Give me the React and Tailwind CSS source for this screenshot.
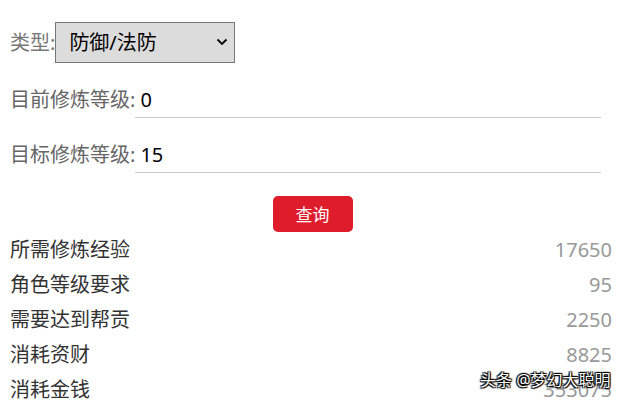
import React, { useState } from "react";

const font = { fontFamily: '"Noto Sans", "Noto Sans CJK SC", sans-serif' };

const results = [
  { label: "所需修炼经验", value: "17650" },
  { label: "角色等级要求", value: "95" },
  { label: "需要达到帮贡", value: "2250" },
  { label: "消耗资财", value: "8825" },
  { label: "消耗金钱", value: "353075" },
];

const App = () => {
  const [type, setType] = useState("防御/法防");
  const [current, setCurrent] = useState("0");
  const [target, setTarget] = useState("15");

  return (
    <div
      className="relative w-[621px] h-[404px] overflow-hidden bg-white font-['Noto_Sans','Noto_Sans_CJK_SC',sans-serif]"
      style={font}
    >
      <div className="pl-[10px] pr-[9px] pt-[22px]">
        {/* type select */}
        <div className="flex items-center h-[41px]">
          <span className="text-[20px] leading-none text-[#777]">类型:</span>
          <div className="relative w-[180px] h-[41px]">
            <select
              value={type}
              onChange={(e) => setType(e.target.value)}
              className="appearance-none w-full h-full bg-[#dcdcdc] border border-[#767676] pl-[13px] text-[20px] text-black outline-none"
            >
              <option>防御/法防</option>
              <option>攻击/法术</option>
              <option>猎术</option>
            </select>
            <svg
              className="absolute right-[7px] top-[16px] pointer-events-none"
              width="12"
              height="8"
              viewBox="0 0 12 8"
            >
              <path d="M1.5 1.5 L6 6 L10.5 1.5" fill="none" stroke="#000" strokeWidth="1.8" />
            </svg>
          </div>
        </div>

        {/* current level */}
        <div className="flex items-center mt-[19px] h-[36px]">
          <span className="text-[20px] leading-none text-[#666] whitespace-nowrap">目前修炼等级:</span>
          <input
            value={current}
            onChange={(e) => setCurrent(e.target.value)}
            className="w-[466px] h-[36px] border-b border-[#c8c8c8] pl-[5px] text-[20px] text-black outline-none"
          />
        </div>

        {/* target level */}
        <div className="flex items-center mt-[19px] h-[36px]">
          <span className="text-[20px] leading-none text-[#666] whitespace-nowrap">目标修炼等级:</span>
          <input
            value={target}
            onChange={(e) => setTarget(e.target.value)}
            className="w-[466px] h-[36px] border-b border-[#c8c8c8] pl-[5px] text-[20px] text-black outline-none"
          />
        </div>

        <div className="flex justify-center mt-[23px] pl-[3px]">
          <button className="w-[80px] h-[36px] rounded-[5px] bg-[#df1c2c] text-white text-[17px] leading-none">
            查询
          </button>
        </div>

        {/* results */}
        <div>
          {results.map((r) => (
            <div key={r.label} className="flex items-center justify-between h-[35px]">
              <span className="text-[20px] leading-none text-[#333]">{r.label}</span>
              <span className="text-[20px] leading-none text-[#999]">{r.value}</span>
            </div>
          ))}
        </div>
      </div>

      {/* watermark */}
      <div className="absolute left-[480px] top-[372px] text-[16px] leading-none text-white whitespace-nowrap [text-shadow:0_0_1px_#000,1px_1px_1px_#000,-1px_-1px_1px_#000,1px_-1px_1px_#000,-1px_1px_1px_#000]">
        头条 @梦幻大聪明
      </div>
    </div>
  );
};

export default App;
